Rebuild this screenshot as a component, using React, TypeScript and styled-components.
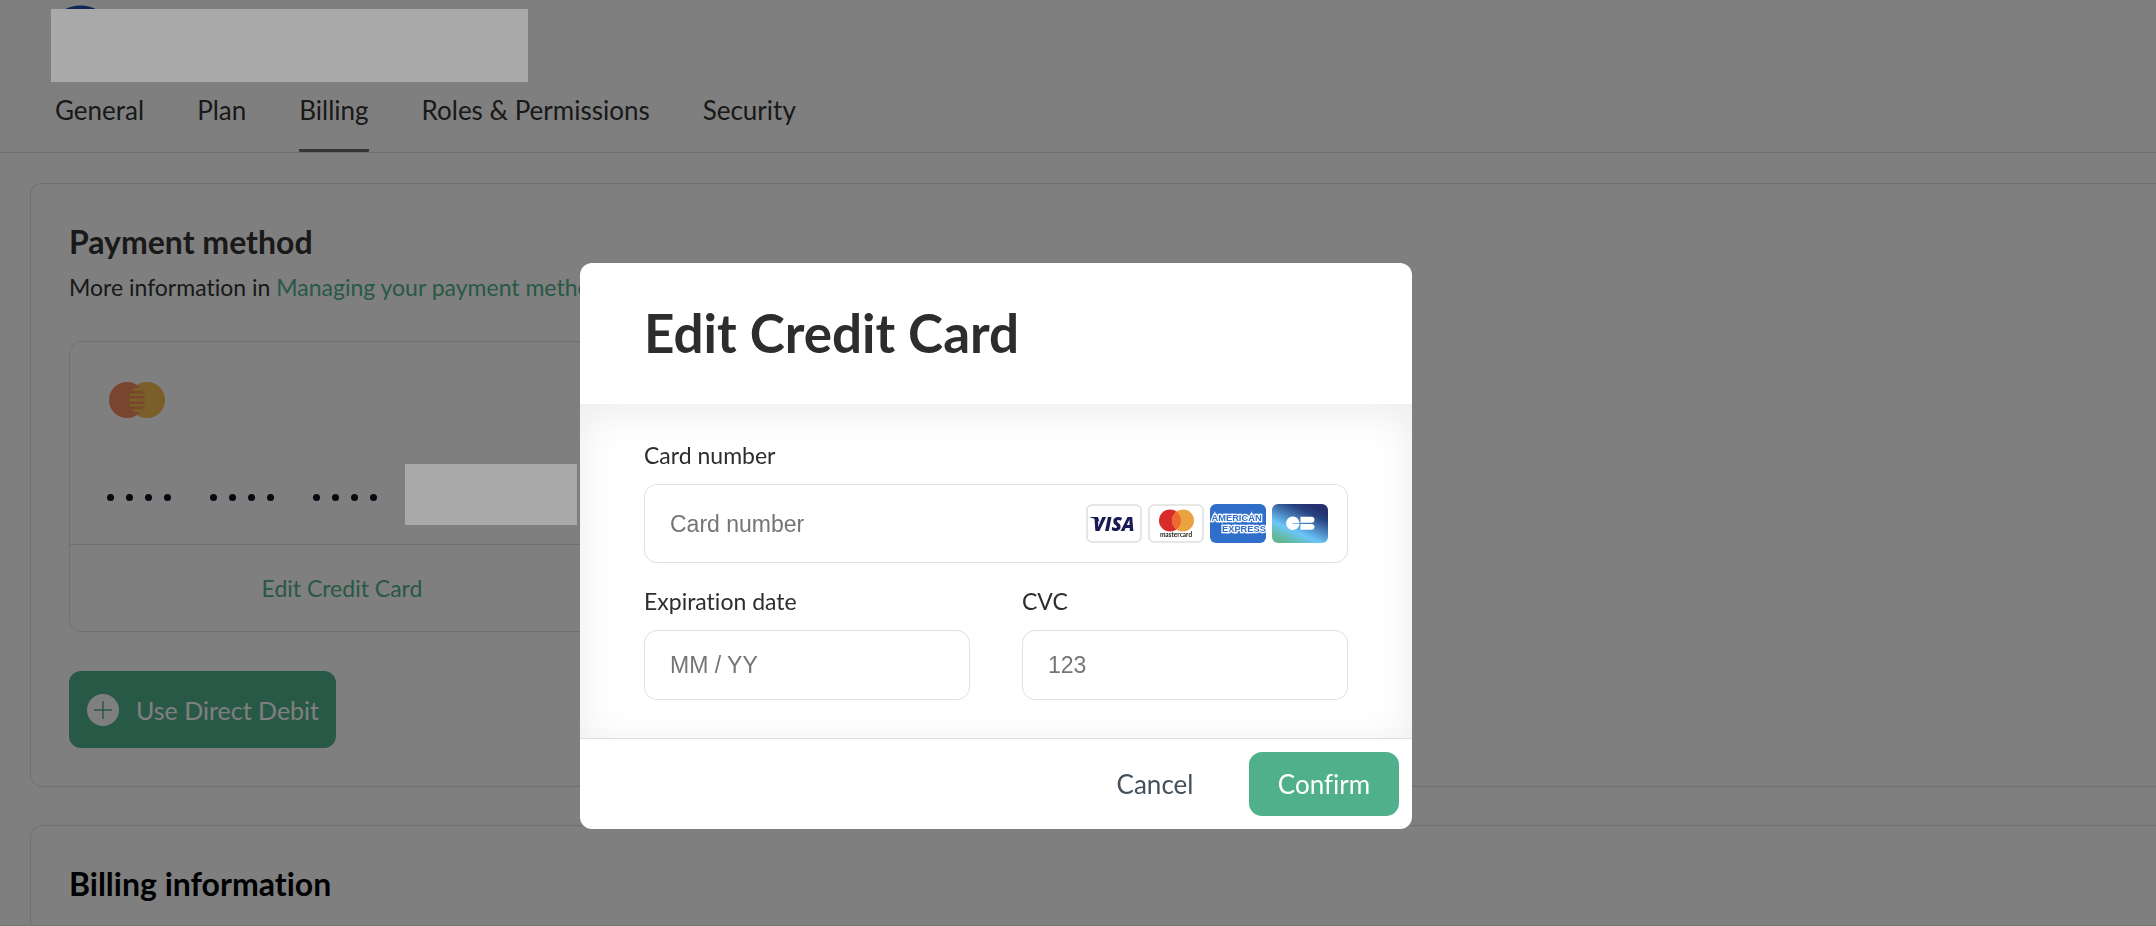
import React from "react";
import styled, { createGlobalStyle } from "styled-components";

const GlobalStyle = createGlobalStyle`
  *, *::before, *::after { box-sizing: border-box; }
  body {
    margin: 0;
    background: #ffffff;
    color: #323232;
    font-family: Lato, "Open Sans", sans-serif;
    font-variant-ligatures: none;
  }
  h1, h2, p { margin: 0; }
  button, input { font-family: inherit; font-variant-ligatures: inherit; }
`;

const green = "#51b08c";
const line = "#e0e0e0";

const Page = styled.div`
  display: flex;
  flex-direction: column;
  height: 100vh;
  overflow: hidden;
  border-bottom: 1px solid #eeeeee;
`;

const Header = styled.header`
  display: flex;
  flex-direction: column;
  align-items: flex-start;
  flex-shrink: 0;
  padding: 5px 55px 0;
  border-bottom: 1px solid ${line};
`;

const Logo = styled.svg`
  display: block;
  margin-left: 9px;
`;

const Redacted = styled.div<{ $width: number; $height: number }>`
  position: relative;
  z-index: 2;
  width: ${(p) => p.$width}px;
  height: ${(p) => p.$height}px;
  background: #a9a9a9;
`;

const AccountName = styled(Redacted)`
  margin: 0 0 12px -4px;
`;

const Tabs = styled.nav`
  display: flex;
  gap: 53px;
`;

const Tab = styled.a<{ $active?: boolean }>`
  padding-bottom: 23px;
  border-bottom: 3px solid ${(p) => (p.$active ? "#6b6b6b" : "transparent")};
  border-radius: 1px;
  color: #323232;
  font-size: 26px;
  line-height: 32px;
  text-decoration: none;
`;

const Main = styled.main`
  display: flex;
  flex: 1;
  flex-direction: column;
  gap: 38px;
  min-height: 0;
  padding: 30px 0 0 30px;
`;

const Panel = styled.section<{ $grow?: boolean }>`
  flex: ${(p) => (p.$grow ? "1 0 auto" : "none")};
  padding: 39px 38px 38px;
  border: 1px solid ${line};
  border-right: 0;
  border-radius: 12px 0 0 12px;
`;

const PanelTitle = styled.h2<{ $dark?: boolean }>`
  color: ${(p) => (p.$dark ? "#000000" : "#323232")};
  font-size: 32px;
  font-weight: 700;
  line-height: 38px;
`;

const PanelNote = styled.p`
  margin: 12px 0 40px;
  font-size: 23px;
  line-height: 28px;
`;

const TextLink = styled.a`
  color: ${green};
  text-decoration: none;
`;

const SavedCard = styled.div`
  width: 546px;
  border: 1px solid ${line};
  border-radius: 12px;
`;

const SavedCardTop = styled.div`
  padding: 40px 0 19px 37px;
  border-bottom: 1px solid ${line};

  > svg { display: block; }
`;

const MaskedNumber = styled.div`
  display: flex;
  align-items: center;
  gap: 39px;
  margin-top: 46px;
`;

const DotGroup = styled.span`
  display: flex;
  gap: 12px;
`;

const Dot = styled.i`
  width: 7px;
  height: 7px;
  margin-top: 6px;
  border-radius: 50%;
  background: #0a1420;
`;

const LastDigits = styled(Redacted)`
  margin-left: -11px;
`;

const EditButton = styled.button`
  display: block;
  width: 100%;
  height: 86px;
  padding: 0;
  border: 0;
  background: none;
  color: ${green};
  font-size: 23px;
  line-height: 28px;
`;

const DebitButton = styled.button`
  display: flex;
  align-items: center;
  gap: 17px;
  min-width: 267px;
  height: 77px;
  margin-top: 39px;
  padding: 0 14px 0 18px;
  border: 0;
  border-radius: 12px;
  background: ${green};
  color: #ffffff;
  font-size: 25px;
  line-height: 32px;
`;

const Backdrop = styled.div`
  position: fixed;
  inset: 0;
  z-index: 1;
  display: flex;
  align-items: flex-start;
  justify-content: center;
  padding: 263px 164px 0 0;
  background: rgba(0, 0, 0, 0.5);
`;

const Dialog = styled.form`
  width: 832px;
  overflow: hidden;
  border-radius: 12px;
  background: #ffffff;
`;

const DialogHeader = styled.header`
  padding: 39px 64px 40px;
`;

const DialogTitle = styled.h1`
  color: #2d2d2d;
  font-size: 53px;
  font-weight: 700;
  line-height: 62px;
`;

const DialogBody = styled.div`
  display: flex;
  flex-direction: column;
  gap: 24px;
  padding: 37px 64px 38px;
  box-shadow: inset 0 8px 40px rgba(0, 0, 0, 0.08);
`;

const FieldRow = styled.div`
  display: grid;
  grid-template-columns: repeat(2, minmax(0, 1fr));
  gap: 52px;
`;

const Field = styled.div`
  display: flex;
  flex-direction: column;
  gap: 15px;
`;

const Label = styled.label`
  color: #2d2d2d;
  font-size: 23px;
  line-height: 28px;
`;

const InputBox = styled.div<{ $tall?: boolean }>`
  display: flex;
  align-items: center;
  height: ${(p) => (p.$tall ? 79 : 70)}px;
  padding: 0 19px 0 25px;
  border: 1px solid ${line};
  border-radius: 13px;
  background: #ffffff;
`;

const Input = styled.input`
  flex: 1;
  min-width: 0;
  padding: 0;
  border: 0;
  outline: 0;
  background: none;
  color: #2d2d2d;
  font-family: "Liberation Sans", Arial, sans-serif;
  font-size: 23px;
  line-height: 28px;

  &::placeholder { color: #757575; opacity: 1; }
`;

const Brands = styled.div`
  display: flex;
  gap: 6px;

  svg { display: block; }
`;

const DialogFooter = styled.footer`
  display: flex;
  align-items: center;
  justify-content: flex-end;
  gap: 19px;
  padding: 13px;
  border-top: 1px solid #dddddd;
`;

const DialogButton = styled.button<{ $primary?: boolean }>`
  height: 64px;
  min-width: 150px;
  padding: 0 26px;
  border: 0;
  border-radius: 13px;
  background: ${(p) => (p.$primary ? green : "transparent")};
  color: ${(p) => (p.$primary ? "#ffffff" : "#43515c")};
  font-size: 26px;
  line-height: 32px;
`;

const SavedMastercard = () => (
  <svg width="60" height="36" viewBox="0 0 60 36" aria-label="Mastercard">
    <defs>
      <clipPath id="overlap-left"><circle cx="20" cy="18" r="18" /></clipPath>
      <clipPath id="overlap-right"><circle cx="40" cy="18" r="18" /></clipPath>
    </defs>
    <circle cx="20" cy="18" r="18" fill="#f28a5e" />
    <circle cx="40" cy="18" r="18" fill="#f4be50" />
    <g clipPath="url(#overlap-left)">
      <g clipPath="url(#overlap-right)" fill="#f28a5e">
        <path d="M22 0h16v6H22zM22 9h16v2.5H22zM22 14h16v2.5H22zM22 19.5h16V22H22zM22 24.500h16V27H22zM22 30h16v6H22z" />
      </g>
    </g>
  </svg>
);

const PlusIcon = () => (
  <svg width="32" height="32" viewBox="0 0 32 32" aria-hidden="true">
    <circle cx="16" cy="16" r="16" fill="#ffffff" />
    <path d="M16 7.500v17M7.500 16h17" stroke={green} strokeWidth="1.500" strokeLinecap="round" />
  </svg>
);

const VisaIcon = () => (
  <svg width="56" height="39" viewBox="0 0 56 39" aria-label="Visa">
    <rect x="1" y="1" width="54" height="37" rx="5" fill="#ffffff" stroke={line} strokeWidth="1.600" />
    <path d="M4 13h8l1.500 5q-3-3.500-9.500-4.500z" fill="#1a1a55" />
    <text x="7" y="26.500" fill="#1a1a55" fontFamily="Open Sans" fontSize="19" fontStyle="italic" fontWeight="800">VISA</text>
  </svg>
);

const MastercardIcon = () => (
  <svg width="56" height="39" viewBox="0 0 56 39" aria-label="Mastercard">
    <rect x="1" y="1" width="54" height="37" rx="5" fill="#ffffff" stroke={line} strokeWidth="1.600" />
    <circle cx="22" cy="16.500" r="11" fill="#d82c2b" />
    <circle cx="35" cy="16.500" r="11" fill="#eba342" />
    <path d="M28.500 7.600a11 11 0 0 1 0 17.800a11 11 0 0 1 0-17.800z" fill="#ee6b2f" />
    <text x="28" y="33" fill="#2a2522" fontFamily="Lato" fontSize="6.500" fontWeight="700" textAnchor="middle">mastercard</text>
  </svg>
);

const AmexIcon = () => (
  <svg width="56" height="39" viewBox="0 0 56 39" aria-label="American Express">
    <rect width="56" height="39" rx="6" fill="#306fc9" />
    <g
      fill="#306fc9"
      stroke="#ffffff"
      strokeWidth="2.400"
      paintOrder="stroke"
      fontFamily="Liberation Sans"
      fontSize="9.300"
      fontWeight="700"
    >
      <text x="1.500" y="17">AMERICAN</text>
      <text x="12" y="28">EXPRESS</text>
    </g>
  </svg>
);

const CartesBancairesIcon = () => (
  <svg width="56" height="39" viewBox="0 0 56 39" aria-label="Cartes Bancaires">
    <defs>
      <linearGradient id="cb" gradientUnits="userSpaceOnUse" x1="40" y1="2" x2="20" y2="46">
        <stop offset="0" stopColor="#25306f" />
        <stop offset="0.150" stopColor="#27407f" />
        <stop offset="0.620" stopColor="#6cc5f9" />
        <stop offset="0.900" stopColor="#62b896" />
      </linearGradient>
    </defs>
    <rect width="56" height="39" rx="6" fill="url(#cb)" />
    <path
      d="M27.500 18.900H20.500v0.800h7A6.700 6.700 0 1 1 27.500 18.900z"
      fill="#ffffff"
    />
    <path d="M28.500 12.800h11a2.900 2.900 0 0 1 0 5.900h-11zM28.500 19.900h11a2.900 2.900 0 0 1 0 5.900h-11z" fill="#ffffff" />
  </svg>
);

const groups = [0, 1, 2];
const dots = [0, 1, 2, 3];

const PaymentPanel = () => (
  <Panel>
    <PanelTitle>Payment method</PanelTitle>
    <PanelNote>
      More information in <TextLink href="#payment-methods">Managing your payment methods</TextLink>
    </PanelNote>
    <SavedCard>
      <SavedCardTop>
        <SavedMastercard />
        <MaskedNumber>
          {groups.map((g) => (
            <DotGroup key={g}>
              {dots.map((d) => <Dot key={d} />)}
            </DotGroup>
          ))}
          <LastDigits $width={172} $height={61} />
        </MaskedNumber>
      </SavedCardTop>
      <EditButton type="button">Edit Credit Card</EditButton>
    </SavedCard>
    <DebitButton type="button">
      <PlusIcon />
      Use Direct Debit
    </DebitButton>
  </Panel>
);

const EditCardDialog = () => (
  <Backdrop>
    <Dialog role="dialog" aria-labelledby="dialog-title">
      <DialogHeader>
        <DialogTitle id="dialog-title">Edit Credit Card</DialogTitle>
      </DialogHeader>
      <DialogBody>
        <Field>
          <Label htmlFor="card-number">Card number</Label>
          <InputBox $tall>
            <Input id="card-number" placeholder="Card number" />
            <Brands>
              <VisaIcon />
              <MastercardIcon />
              <AmexIcon />
              <CartesBancairesIcon />
            </Brands>
          </InputBox>
        </Field>
        <FieldRow>
          <Field>
            <Label htmlFor="expiration">Expiration date</Label>
            <InputBox>
              <Input id="expiration" placeholder="MM / YY" />
            </InputBox>
          </Field>
          <Field>
            <Label htmlFor="cvc">CVC</Label>
            <InputBox>
              <Input id="cvc" placeholder="123" />
            </InputBox>
          </Field>
        </FieldRow>
      </DialogBody>
      <DialogFooter>
        <DialogButton type="button">Cancel</DialogButton>
        <DialogButton type="submit" $primary>Confirm</DialogButton>
      </DialogFooter>
    </Dialog>
  </Backdrop>
);

export default function App() {
  return (
    <>
      <GlobalStyle />
      <Page>
        <Header>
          <Logo width="33" height="4" viewBox="0 0 33 4" aria-hidden="true">
            <ellipse cx="16.500" cy="16" rx="24" ry="15.500" fill="#1c50ac" />
          </Logo>
          <AccountName $width={477} $height={73} />
          <Tabs>
            <Tab href="#general">General</Tab>
            <Tab href="#plan">Plan</Tab>
            <Tab href="#billing" $active>Billing</Tab>
            <Tab href="#roles">Roles &amp; Permissions</Tab>
            <Tab href="#security">Security</Tab>
          </Tabs>
        </Header>
        <Main>
          <PaymentPanel />
          <Panel $grow>
            <PanelTitle $dark>Billing information</PanelTitle>
          </Panel>
        </Main>
      </Page>
      <EditCardDialog />
    </>
  );
}
